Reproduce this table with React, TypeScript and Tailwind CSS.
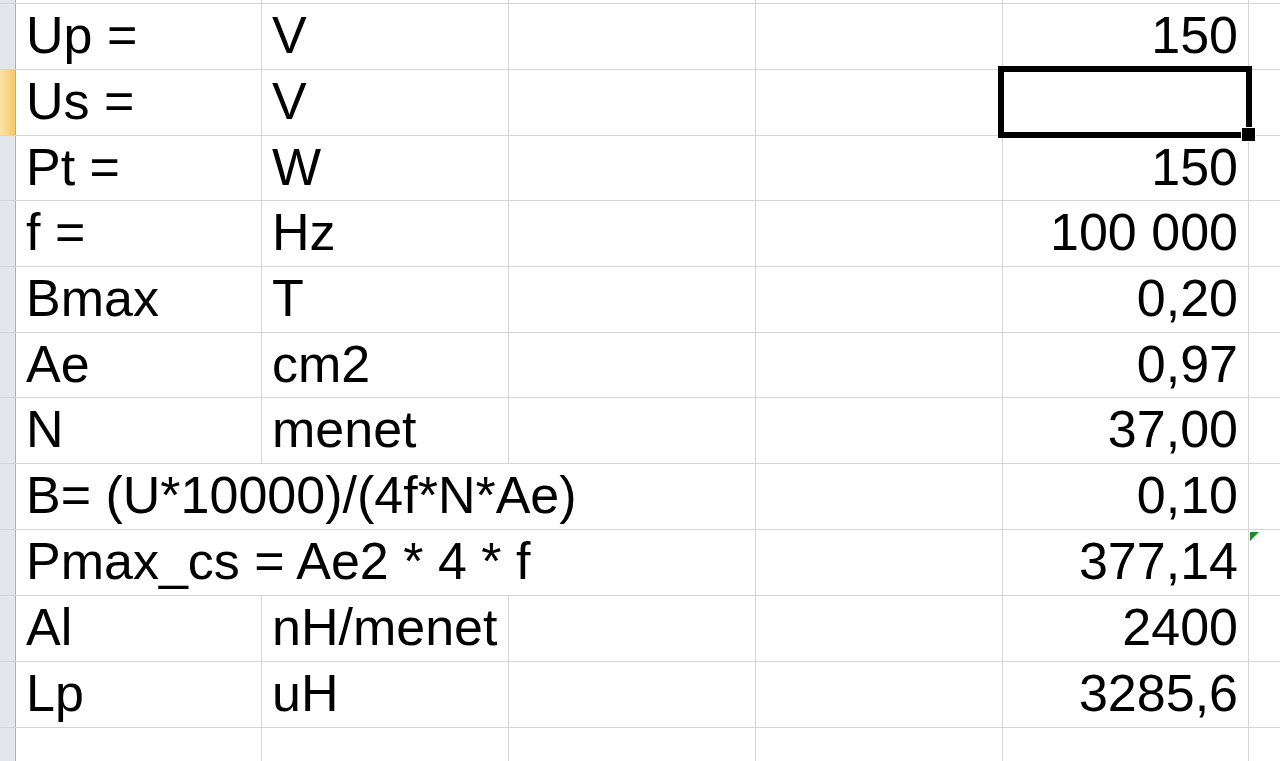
import React from "react";

type Row = {
  a: string;
  b?: string;
  e: string;
  span?: boolean;
  h: string;
  selected?: boolean;
  flag?: boolean;
};

const rows: Row[] = [
  { a: "Up =", b: "V", e: "150", h: "h-[65px] leading-[63px]" },
  { a: "Us =", b: "V", e: "", h: "h-[65px] leading-[63px]", selected: true },
  { a: "Pt =", b: "W", e: "150", h: "h-[64px] leading-[62px]" },
  { a: "f =", b: "Hz", e: "100 000", h: "h-[65px] leading-[63px]" },
  { a: "Bmax", b: "T", e: "0,20", h: "h-[65px] leading-[63px]" },
  { a: "Ae", b: "cm2", e: "0,97", h: "h-[64px] leading-[62px]" },
  { a: "N", b: "menet", e: "37,00", h: "h-[65px] leading-[63px]" },
  { a: "B= (U*10000)/(4f*N*Ae)", e: "0,10", span: true, h: "h-[65px] leading-[63px]" },
  { a: "Pmax_cs = Ae2 * 4 * f", e: "377,14", span: true, h: "h-[65px] leading-[63px]", flag: true },
  { a: "Al", b: "nH/menet", e: "2400", h: "h-[65px] leading-[63px]" },
  { a: "Lp", b: "uH", e: "3285,6", h: "h-[65px] leading-[63px]" },
  { a: "", b: "", e: "", h: "h-[65px] leading-[63px]" },
];

const grid = "border-r border-[#d4d4d4]";

const RowHeader = ({ selected, h }: { selected?: boolean; h: string }) => (
  <div
    className={`${h} w-[16px] shrink-0 border-r ${
      selected
        ? "bg-gradient-to-r from-[#fbe3a6] to-[#f5c86a] border-[#e3a53c]"
        : "bg-[#e4e6ec] border-[#a9b0bb]"
    }`}
  />
);

const EmptyRowTop = () => (
  <div className="flex h-[4px] border-b border-[#d4d4d4]">
    <div className="w-[16px] shrink-0 border-r border-[#a9b0bb] bg-[#e4e6ec]" />
    <div className={`w-[246px] shrink-0 ${grid}`} />
    <div className={`w-[247px] shrink-0 ${grid}`} />
    <div className={`w-[247px] shrink-0 ${grid}`} />
    <div className={`w-[247px] shrink-0 ${grid}`} />
    <div className={`w-[246px] shrink-0 ${grid}`} />
    <div className="flex-1" />
  </div>
);

export default function App() {
  return (
    <div
      className="h-[761px] w-[1280px] overflow-hidden bg-white text-[52px] text-black"
      style={{ fontFamily: '"Liberation Sans", Arial, sans-serif' }}
    >
      <EmptyRowTop />
      {rows.map((r, i) => (
        <div key={i} className={`flex ${r.h} box-content border-b border-[#d4d4d4]`}>
          <RowHeader selected={r.selected} h={r.h} />
          {r.span ? (
            <div className={`w-[740px] shrink-0 whitespace-nowrap pl-[10px] ${grid}`}>
              {r.a}
            </div>
          ) : (
            <>
              <div className={`w-[246px] shrink-0 whitespace-nowrap pl-[10px] ${grid}`}>
                {r.a}
              </div>
              <div className={`w-[247px] shrink-0 whitespace-nowrap pl-[10px] ${grid}`}>
                {r.b}
              </div>
              <div className={`w-[247px] shrink-0 ${grid}`} />
            </>
          )}
          <div className={`w-[247px] shrink-0 ${grid}`} />
          <div className={`relative w-[246px] shrink-0 pr-[10px] text-right ${grid}`}>
            {r.e}
            {r.selected && (
              <div className="absolute -left-[5px] -right-[4px] -top-[4px] -bottom-[3px] z-10 border-[6px] border-black">
                <div className="absolute -bottom-[10px] -right-[10px] h-[15px] w-[15px] border border-white bg-black" />
              </div>
            )}
          </div>
          <div className="relative flex-1">
            {r.flag && (
              <svg className="absolute left-[1px] top-[2px]" width="9" height="9" viewBox="0 0 9 9">
                <polygon points="0,0 9,0 0,9" fill="#1f8a2c" />
              </svg>
            )}
          </div>
        </div>
      ))}
    </div>
  );
}
